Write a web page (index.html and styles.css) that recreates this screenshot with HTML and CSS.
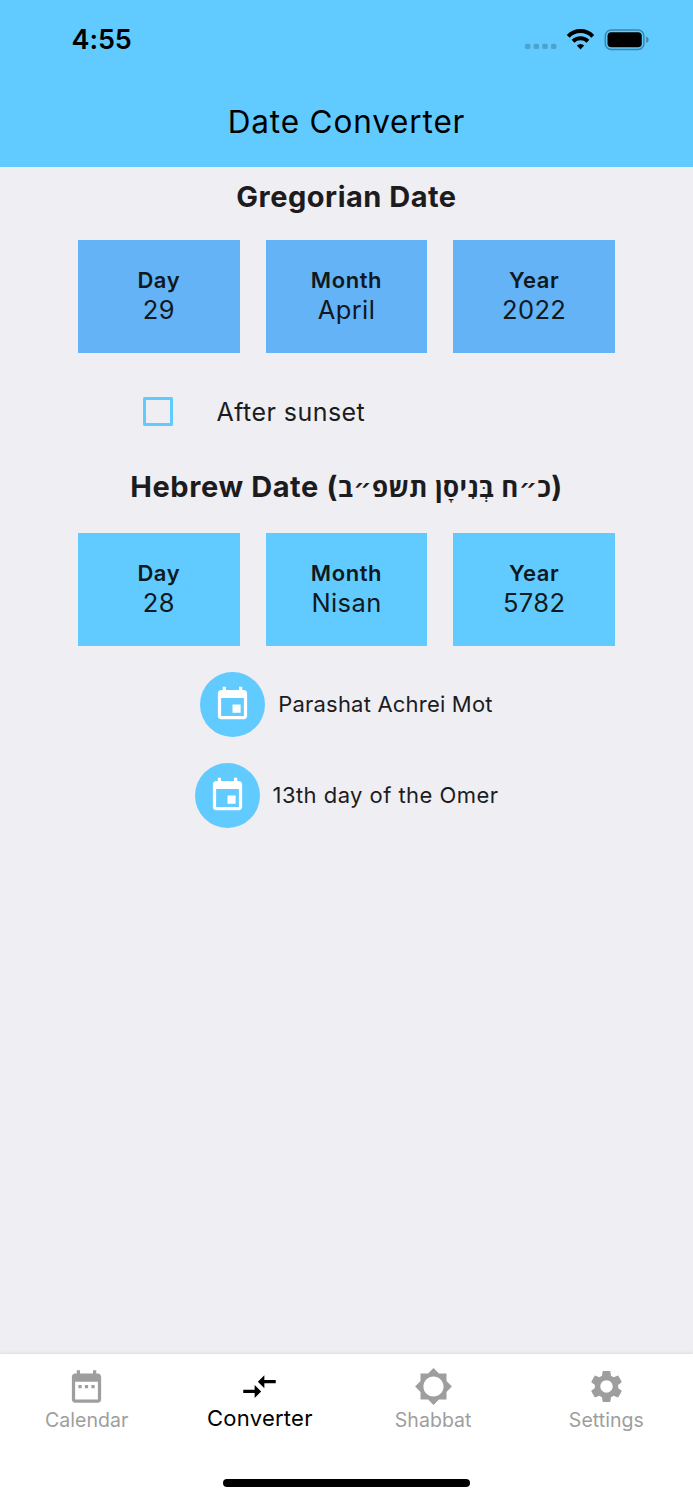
FILE: index.html
```html
<!DOCTYPE html>
<html lang="en">
<head>
<meta charset="utf-8">
<title>Date Converter</title>
<link rel="stylesheet" href="styles.css">
</head>
<body>
<div class="app">
  <header class="header">
    <div class="status">
      <span class="time">4:55</span>
      <svg class="status-icons" width="126" height="26" viewBox="0 0 126 26">
        <g fill="#4ea3cc"><rect x="1" y="16.7" width="5.4" height="5.4" rx="1.5"/><rect x="9.6" y="16.7" width="5.4" height="5.4" rx="1.5"/><rect x="18.3" y="16.7" width="5.4" height="5.4" rx="1.5"/><rect x="27" y="16.7" width="5.4" height="5.4" rx="1.5"/></g>
        <g fill="none" stroke="#000" stroke-width="4"><path d="M44.2 9.300a17.200 17.200 0 0 1 24.600 0"/><path d="M49 14.300a10.800 10.800 0 0 1 15 0"/></g>
        <path d="M56.500 22.500L52.800 18.600Q56.500 15.600 60.200 18.600Z"/>
        <rect x="81.300" y="3" width="38.600" height="19.500" rx="5.800" fill="none" stroke="#3f85a8" stroke-width="1.500"/>
        <rect x="83.500" y="5.300" width="34.300" height="15" rx="3.800"/>
        <path d="M122.200 9.500Q124.700 10.500 124.700 12.700T122.200 16Z" fill="#3f85a8"/>
      </svg>
    </div>
    <h1 class="title">Date Converter</h1>
  </header>
  <main class="content">
    <h2 class="heading heading-greg">Gregorian Date</h2>
    <div class="cards cards-greg">
      <div class="card"><b class="label">Day</b><span class="value">29</span></div>
      <div class="card"><b class="label">Month</b><span class="value">April</span></div>
      <div class="card"><b class="label">Year</b><span class="value">2022</span></div>
    </div>
    <div class="sunset"><span class="checkbox"></span><span class="sunset-label">After sunset</span></div>
    <h2 class="heading heading-heb">Hebrew Date (<span class="hebrew">כ״ח בְּנִיסָן תשפ״ב</span>)</h2>
    <div class="cards cards-heb">
      <div class="card"><b class="label">Day</b><span class="value">28</span></div>
      <div class="card"><b class="label">Month</b><span class="value">Nisan</span></div>
      <div class="card"><b class="label">Year</b><span class="value">5782</span></div>
    </div>
    <div class="event event-parasha">
      <span class="avatar"><svg class="icon" viewBox="0 0 24 24"><path d="M17 12h-5v5h5v-5zM16 1v2H8V1H6v2H5c-1.110 0-1.990.9-1.990 2L3 19c0 1.100.89 2 2 2h14c1.100 0 2-.9 2-2V5c0-1.100-.9-2-2-2h-1V1h-2zm3 18H5V8h14v11z"/></svg></span>
      <span class="event-text">Parashat Achrei Mot</span>
    </div>
    <div class="event event-omer">
      <span class="avatar"><svg class="icon" viewBox="0 0 24 24"><path d="M17 12h-5v5h5v-5zM16 1v2H8V1H6v2H5c-1.110 0-1.990.9-1.990 2L3 19c0 1.100.89 2 2 2h14c1.100 0 2-.9 2-2V5c0-1.100-.9-2-2-2h-1V1h-2zm3 18H5V8h14v11z"/></svg></span>
      <span class="event-text">13th day of the Omer</span>
    </div>
  </main>
  <footer class="footer">
    <nav class="tabs">
      <div class="tab"><svg class="icon" viewBox="0 0 24 24"><path d="M9 11H7v2h2v-2zm4 0h-2v2h2v-2zm4 0h-2v2h2v-2zm2-7h-1V2h-2v2H8V2H6v2H5c-1.110 0-1.990.9-1.990 2L3 20c0 1.100.89 2 2 2h14c1.100 0 2-.9 2-2V6c0-1.100-.9-2-2-2zm0 16H5V9h14v11z"/></svg><span class="tab-label">Calendar</span></div>
      <div class="tab active"><svg class="icon" viewBox="0 0 24 24"><path d="M9.010 14H2v2h7.010v3L13 15l-3.990-4v3zm5.980-1v-3H22V8h-7.010V5L11 9l3.990 4z"/></svg><span class="tab-label">Converter</span></div>
      <div class="tab"><svg class="icon" viewBox="0 0 24 24"><path d="M20 15.310L23.310 12 20 8.690V4h-4.690L12 .69 8.690 4H4v4.690L.69 12 4 15.310V20h4.690L12 23.310 15.310 20H20v-4.690zM12 18.200c-3.420 0-6.200-2.780-6.200-6.200s2.780-6.200 6.200-6.200 6.200 2.780 6.200 6.200-2.780 6.200-6.200 6.200z"/></svg><span class="tab-label">Shabbat</span></div>
      <div class="tab"><svg class="icon" viewBox="0 0 24 24"><path d="M19.140 12.940c.04-.3.06-.61.06-.94 0-.32-.02-.64-.07-.94l2.030-1.580c.18-.14.23-.41.12-.61l-1.920-3.320c-.12-.22-.37-.29-.59-.22l-2.390.96c-.5-.38-1.030-.7-1.620-.94l-.36-2.540c-.04-.24-.24-.41-.48-.41h-3.840c-.24 0-.43.17-.47.41l-.36 2.540c-.59.24-1.130.57-1.620.94l-2.390-.96c-.22-.08-.47 0-.59.22L2.740 8.870c-.12.21-.08.47.12.61l2.030 1.580c-.05.3-.09.63-.09.94s.02.64.07.94l-2.030 1.580c-.18.14-.23.41-.12.61l1.920 3.320c.12.22.37.29.59.22l2.390-.96c.5.38 1.030.7 1.620.94l.36 2.540c.05.24.24.41.48.41h3.840c.24 0 .44-.17.47-.41l.36-2.540c.59-.24 1.130-.56 1.620-.94l2.390.96c.22.08.47 0 .59-.22l1.920-3.320c.12-.22.07-.47-.12-.61l-2.010-1.580zM12 15.800c-2.090 0-3.800-1.710-3.800-3.800s1.710-3.800 3.800-3.800 3.800 1.710 3.800 3.800-1.710 3.800-3.800 3.800z"/></svg><span class="tab-label">Settings</span></div>
    </nav>
    <div class="home-bar"></div>
  </footer>
</div>
</body>
</html>
```
FILE: styles.css
```css
* { box-sizing: border-box; }
body { margin: 0; font-family: Inter, "Liberation Sans", sans-serif; color: #1c1c1e; }
.app { width: 693px; height: 1500px; display: flex; flex-direction: column; background: #efeef3; overflow: hidden; }

.header { height: 167px; flex: none; background: #61cbff; color: #000; }
.status { height: 77px; padding: 2px 43px 0 71.500px; display: flex; align-items: center; justify-content: space-between; }
.time { font-size: 27px; font-weight: 600; letter-spacing: -0.1px; line-height: 32px; padding-top: 1px; }
.status-icons { display: block; }
.title { margin: 0; text-align: center; font-size: 31.500px; font-weight: 400; line-height: 90px; letter-spacing: 0.85px; }

.content { flex: 1; min-height: 0; }
.heading { margin: 0; text-align: center; font-size: 29px; font-weight: 650; line-height: 36px; height: 36px; white-space: nowrap; box-sizing: content-box; }
.heading-greg { padding-top: 12px; letter-spacing: 0.5px; }
.heading-heb { padding-top: 43px; letter-spacing: 0.6px; }
.hebrew { font-family: "Open Sans", "DejaVu Sans", sans-serif; font-size: 26px; font-weight: 700; letter-spacing: 0.35px; line-height: 30px; }
.cards { display: grid; grid-template-columns: repeat(3, 1fr); gap: 26px; padding: 0 78px; }
.cards-greg { margin-top: 25px; }
.cards-heb { margin-top: 28px; }
.card { height: 113px; padding-top: 25px; display: flex; flex-direction: column; align-items: center; color: #101820; }
.cards-greg .card { background: #64b3f6; }
.cards-heb .card { background: #61cbff; }
.label { font-size: 22px; font-weight: 600; line-height: 30px; letter-spacing: 0.6px; }
.value { font-size: 25.500px; line-height: 30px; letter-spacing: 0.4px; }
.sunset { display: flex; align-items: center; height: 29px; margin: 44px 0 0 143px; gap: 43.500px; }
.checkbox { width: 30px; height: 29px; border: 3px solid #61cbff; border-radius: 1.500px; }
.sunset-label { font-size: 25px; letter-spacing: 0.45px; }

.event { display: flex; align-items: center; justify-content: center; gap: 13px; height: 65px; margin-top: 26px; }
.avatar { width: 65px; height: 65px; border-radius: 50%; background: #61cbff; display: flex; align-items: center; justify-content: center; color: #fff; }
.event-text { font-size: 22px; padding-bottom: 2px; }
.event-parasha .event-text { letter-spacing: 0.2px; }
.event-omer .event-text { letter-spacing: 0.45px; }
.icon { display: block; width: 39px; height: 39px; fill: currentColor; }

.footer { height: 146px; flex: none; background: #fff; box-shadow: 0 -1px 3px rgba(0, 0, 0, 0.08); }
.tabs { display: grid; grid-template-columns: repeat(4, 1fr); height: 125px; padding-top: 12.500px; }
.tab { display: flex; flex-direction: column; align-items: center; color: #9e9e9e; }
.tab-label { font-size: 19.500px; line-height: 24px; margin-top: 2.500px; letter-spacing: 0.05px; }
.active { color: #000; }
.active .tab-label { font-size: 22px; margin-top: 0.500px; letter-spacing: 0.25px; }
.home-bar { width: 247px; height: 8px; border-radius: 4px; background: #000; margin: 0 auto; }
```
